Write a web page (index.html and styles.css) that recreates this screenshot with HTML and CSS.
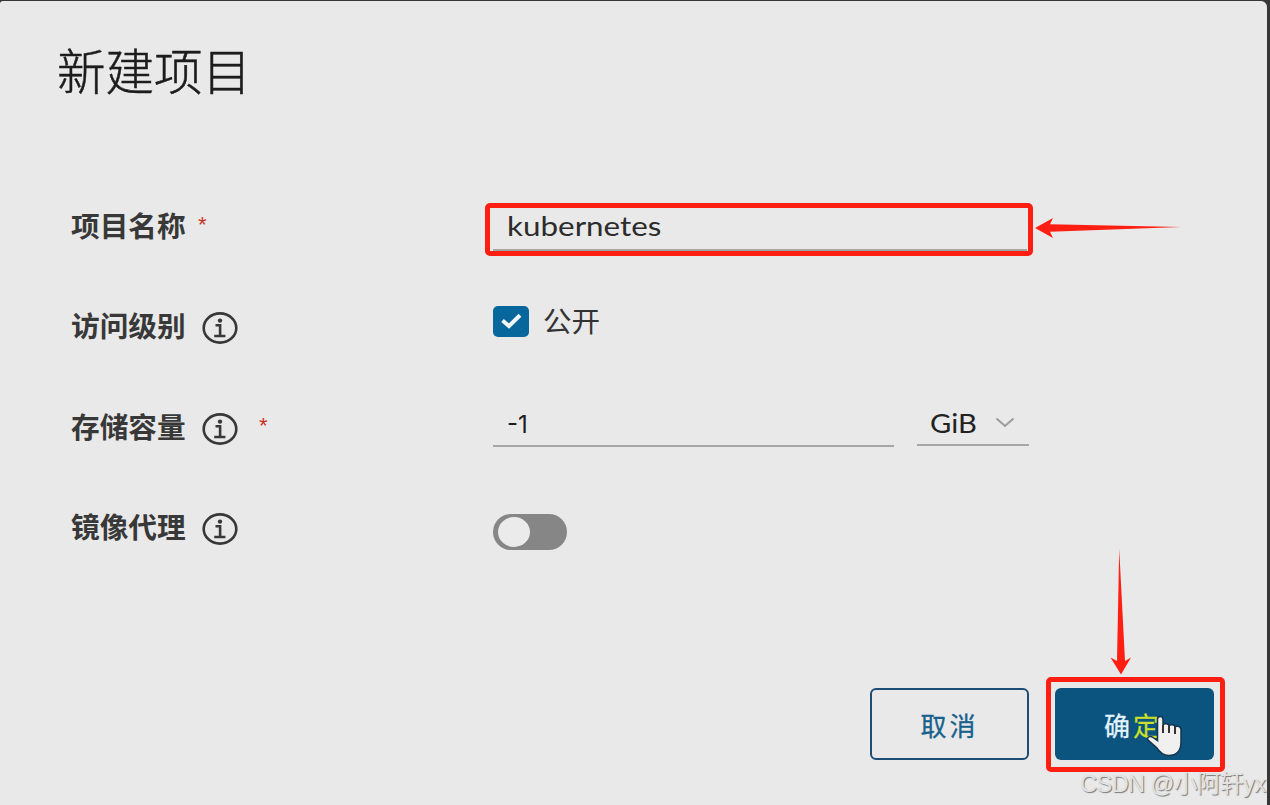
FILE: index.html
```html
<!DOCTYPE html>
<html lang="zh-CN">

<head>
    <meta charset="UTF-8">
    <meta name="viewport" content="width=device-width, initial-scale=1.0">
    <title>新建项目</title>
    <link rel="stylesheet" href="styles.css">
</head>

<body>
    <div class="modal">
        <h1 class="title">新建项目</h1>

        <form class="form">
            <div class="row">
                <div class="label">项目名称 <span class="required">*</span></div>
                <div class="control">
                    <div class="field field-name"><span class="value">kubernetes</span></div>
                </div>
            </div>
            <div class="row">
                <div class="label">访问级别
                    <svg class="info" viewBox="0 0 36 32">
                        <ellipse cx="18" cy="16" rx="16.3" ry="14.6" />
                        <path d="M13.500 13.200h4.600v10M12.200 24h11.200" />
                        <circle class="dot" cx="18" cy="8.600" r="2.200" />
                    </svg>
                </div>
                <div class="control control-public">
                    <span class="checkbox">
                        <svg viewBox="0 0 36 31">
                            <path d="M9.500 14.500l6.500 5.500L27 9.300" />
                        </svg>
                    </span>
                    <span class="public">公开</span>
                </div>
            </div>
            <div class="row">
                <div class="label">存储容量
                    <svg class="info" viewBox="0 0 36 32">
                        <ellipse cx="18" cy="16" rx="16.3" ry="14.6" />
                        <path d="M13.500 13.200h4.600v10M12.200 24h11.200" />
                        <circle class="dot" cx="18" cy="8.600" r="2.200" />
                    </svg>
                    <span class="required required-far">*</span>
                </div>
                <div class="control">
                    <div class="field field-quota"><span class="number">-1</span></div>
                    <div class="field field-unit">
                        <span class="unit">GiB</span>
                        <svg class="chevron" viewBox="0 0 20 11">
                            <path d="M1.5 1.5L10 9l8.500-7.500" />
                        </svg>
                    </div>
                </div>
            </div>
            <div class="row">
                <div class="label">镜像代理
                    <svg class="info" viewBox="0 0 36 32">
                        <ellipse cx="18" cy="16" rx="16.3" ry="14.6" />
                        <path d="M13.500 13.200h4.600v10M12.200 24h11.200" />
                        <circle class="dot" cx="18" cy="8.600" r="2.200" />
                    </svg>
                </div>
                <div class="control control-toggle">
                    <span class="toggle"><span class="knob"></span></span>
                </div>
            </div>
        </form>

        <div class="footer">
            <div class="btn btn-cancel">取消</div>
            <div class="btn btn-ok">确<span class="lit">定</span></div>
        </div>
    </div>

    <!-- marks over the form -->
    <div class="mark mark-name"></div>
    <div class="mark mark-ok"></div>
    <svg class="arrow arrow-left" viewBox="0 0 146 22">
        <path d="M0 11L18 1l-3 6.200L146 10 15 14.800l3 6.200z" />
    </svg>
    <svg class="arrow arrow-down" viewBox="0 0 22 126">
        <path d="M9.200 0L7 112l-6.500-3.500L11 125.500l10-17-6 3.500z" />
    </svg>
    <svg class="cursor" viewBox="0 0 38 44">
        <path d="M10.500 5C10.500 1.500 16 1.500 16 5v6c1-2 6-1.500 6 1 1-2 6-1.500 6 1 1-1.500 6-1 6 2.500V28c0 9-5 13.500-12.500 13.500-6 0-9-3.500-12-8L1 26c-1.500-3 2-4.500 5-2.500l4.500 3z" />
        <path class="gap" d="M16 11v8M22 12v7M28 13v7" />
    </svg>
    <div class="watermark">CSDN @小阿轩yx</div>
</body>

</html>
```

FILE: styles.css
```css
* {
    box-sizing: border-box;
}

body {
    margin: 0;
    height: 805px;
    overflow: hidden;
    position: relative;
    padding-top: 1px;
    background-color: #373737;
    color: #333;
    font-family: Lato, "Noto Sans CJK SC", sans-serif;
}

.modal {
    width: 1267px;
    height: 804px;
    padding: 33px 53px 0 57px;
    border-radius: 3px 6px 0 0;
    background-color: #e9e9e9;
}

.title {
    margin: 0;
    height: 70px;
    line-height: 70px;
    font-size: 48.5px;
    font-weight: 300;
    color: #1c1c1c;
    -webkit-text-stroke: 0.5px #1c1c1c;
    font-family: "Noto Sans CJK SC", sans-serif;
}

.form {
    margin: 70px 0 0 14px;
}

.row {
    display: grid;
    grid-template-columns: 422px 1fr;
    height: 100.5px;
}

.label {
    display: flex;
    align-items: center;
    font-size: 28.7px;
    font-weight: bold;
    color: #383838;
}

.required {
    margin: 6px 0 0 10px;
    font: 22px "Liberation Mono", monospace;
    color: #c8351f;
}

.required-far {
    margin-left: 19px;
}

.info {
    width: 36px;
    height: 32px;
    margin: 7px 0 0 16px;
    fill: none;
    stroke: #383838;
    stroke-width: 2.6;
}

.info .dot {
    fill: #383838;
    stroke: none;
}

.control {
    display: flex;
    align-items: flex-start;
    font-size: 26.5px;
}

.field {
    height: 46px;
    line-height: 47px;
    margin-top: 26px;
    padding-left: 14px;
    border-bottom: 2px solid #a6a6a6;
}

.field-name {
    width: 534px;
    height: 51px;
    line-height: 52px;
}

.value {
    display: inline-block;
    transform: scaleX(1.185);
    transform-origin: left;
    color: #2c2c2c;
}

.field-quota {
    width: 401px;
    font-family: Inter, sans-serif;
    font-size: 24px;
    color: #1c1c1c;
}

.field-unit {
    display: flex;
    width: 112px;
    height: 45px;
    line-height: 44px;
    margin-left: 23px;
    padding-left: 13px;
    color: #222;
}

.unit {
    transform: scaleX(1.1);
    transform-origin: left;
}

.chevron {
    width: 20px;
    height: 11px;
    margin: 16px 0 0 22px;
    fill: none;
    stroke: #9b9b9b;
    stroke-width: 2;
}

.control-public {
    padding-top: 31px;
}

.checkbox {
    width: 36px;
    height: 31px;
    border-radius: 5px;
    background-color: #07669b;
}

.checkbox svg {
    display: block;
    fill: none;
    stroke: #f2f6f8;
    stroke-width: 4;
}

.public {
    margin-left: 14px;
    line-height: 31px;
    font-size: 28.5px;
    color: #333;
}

.control-toggle {
    padding-top: 38px;
}

.toggle {
    width: 74px;
    height: 36px;
    padding: 3px 5px;
    border-radius: 18px;
    background-color: #868686;
}

.knob {
    display: block;
    width: 32px;
    height: 30px;
    border-radius: 50%;
    background-color: #ebebeb;
}

.footer {
    display: flex;
    justify-content: flex-end;
    gap: 26px;
    margin-top: 112px;
}

.btn {
    width: 159px;
    height: 72px;
    border-radius: 6px;
    line-height: 76px;
    text-align: center;
    font-size: 26px;
    letter-spacing: 3px;
    -webkit-text-stroke: 0.3px;
}

.btn-cancel {
    border: 2px solid #1d4d74;
    line-height: 72px;
    color: #17618c;
}

.btn-ok {
    padding-right: 3px;
    background-color: #0a547f;
    color: #e4f3fa;
}

.lit {
    color: #c9df2b;
}

.mark {
    position: absolute;
    border: 5px solid #ff1f12;
    border-radius: 5px;
}

.mark-name {
    left: 485px;
    top: 203px;
    width: 548px;
    height: 53px;
}

.mark-ok {
    left: 1046px;
    top: 677px;
    width: 179px;
    height: 95px;
}

.arrow {
    position: absolute;
    fill: #ff1f12;
}

.arrow-left {
    left: 1035px;
    top: 217px;
    width: 146px;
    height: 22px;
}

.arrow-down {
    left: 1110px;
    top: 549px;
    width: 22px;
    height: 126px;
}

.cursor {
    position: absolute;
    left: 1147px;
    top: 714px;
    width: 38px;
    height: 44px;
    fill: #f0f0f0;
    stroke: #16344a;
    stroke-width: 1.5;
}

.cursor .gap {
    stroke: #333;
    stroke-width: 2;
}

.watermark {
    position: absolute;
    left: 1080px;
    top: 766px;
    line-height: 36px;
    white-space: nowrap;
    font-family: "Liberation Sans", "Noto Sans CJK SC", sans-serif;
    font-size: 23.5px;
    letter-spacing: -0.5px;
    color: #e2e2e2;
    text-shadow: 1px 1px 1px #777;
}
```
